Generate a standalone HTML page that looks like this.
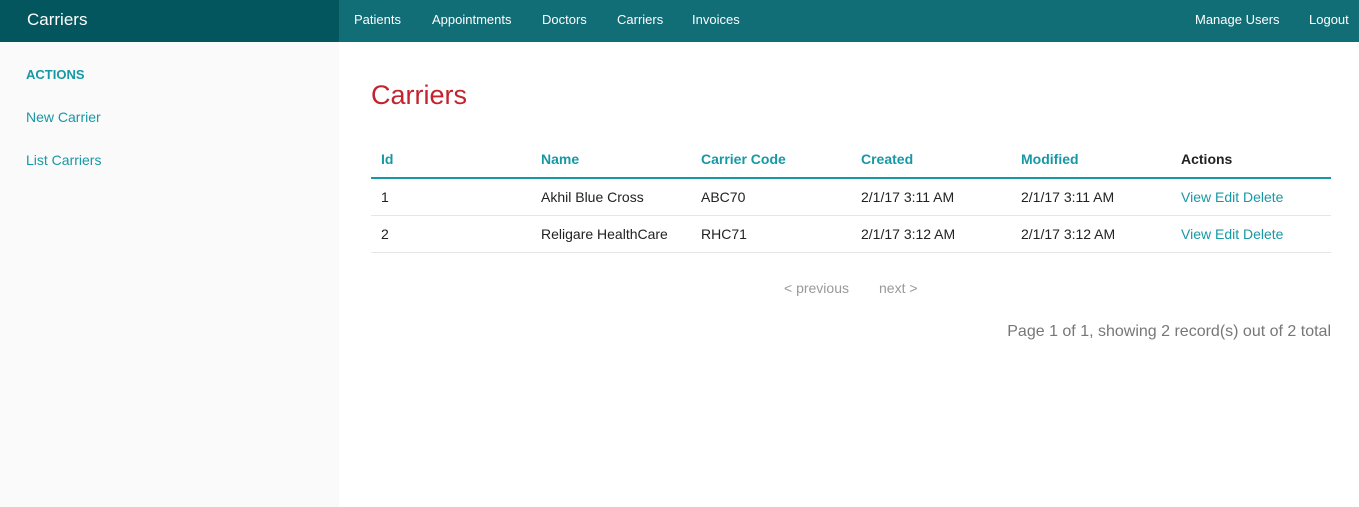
<!DOCTYPE html>
<html><head><style>
*{margin:0;padding:0;box-sizing:border-box}
body{width:1359px;height:507px;font-family:"Liberation Sans",sans-serif;background:#fff;position:relative;overflow:hidden}
.top{position:absolute;left:0;top:0;width:1359px;height:42px;background:#116d76}
.brand{position:absolute;left:0;top:0;width:339px;height:42px;background:#03565d;color:#fff;font-size:17px;line-height:40px;padding-left:27px}
.nav a{position:absolute;top:12px;color:#fff;font-size:13px;text-decoration:none}
.side{position:absolute;left:0;top:42px;width:339px;height:465px;background:#fafafa}
.side h4{position:absolute;left:26px;top:25px;color:#1798a5;font-size:13px;font-weight:bold}
.side a{position:absolute;left:26px;color:#1798a5;font-size:14px;text-decoration:none}
h3{position:absolute;left:371px;top:80px;color:#c3232d;font-size:27px;font-weight:normal}
table{position:absolute;left:371px;top:140px;width:960px;border-collapse:collapse;font-size:14px}
th{text-align:left;color:#1798a5;font-weight:bold;height:38px;border-bottom:2px solid #1798a5;padding-left:10px;font-size:14px}
th:last-child{color:#222}
td{height:37px;padding-left:10px;border-bottom:1px solid #e6e6e6;color:#222}
td a{color:#1798a5}
.pg{position:absolute;top:280px;font-size:14px;color:#999}
.cnt{position:absolute;right:28px;top:323px;font-size:16px;color:#777}
</style></head><body>
<div class="top"></div>
<div class="brand">Carriers</div>
<div class="nav">
<a style="left:354px">Patients</a><a style="left:432px">Appointments</a><a style="left:542px">Doctors</a><a style="left:617px">Carriers</a><a style="left:692px">Invoices</a><a style="left:1195px">Manage Users</a><a style="left:1309px">Logout</a>
</div>
<div class="side"><h4>ACTIONS</h4><a style="top:67px">New Carrier</a><a style="top:110px">List Carriers</a></div>
<h3>Carriers</h3>
<table>
<tr><th style="width:160px">Id</th><th style="width:160px">Name</th><th style="width:160px">Carrier Code</th><th style="width:160px">Created</th><th style="width:160px">Modified</th><th>Actions</th></tr>
<tr><td>1</td><td>Akhil Blue Cross</td><td>ABC70</td><td>2/1/17 3:11 AM</td><td>2/1/17 3:11 AM</td><td><a>View</a> <a>Edit</a> <a>Delete</a></td></tr>
<tr><td>2</td><td>Religare HealthCare</td><td>RHC71</td><td>2/1/17 3:12 AM</td><td>2/1/17 3:12 AM</td><td><a>View</a> <a>Edit</a> <a>Delete</a></td></tr>
</table>
<div class="pg" style="left:784px">&lt; previous</div>
<div class="pg" style="left:879px">next &gt;</div>
<div class="cnt">Page 1 of 1, showing 2 record(s) out of 2 total</div>
</body></html>
